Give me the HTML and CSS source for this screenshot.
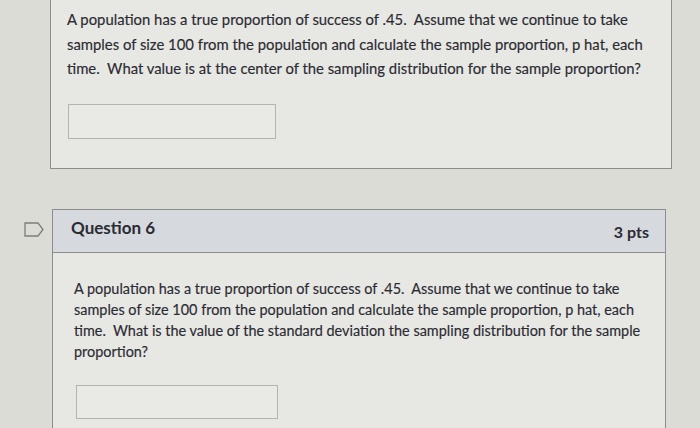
FILE: index.html
```html
<!DOCTYPE html>
<html>
<head>
<meta charset="utf-8">
<link rel="stylesheet" href="styles.css">
</head>
<body>
<div class="page">
  <div class="card card-prev">
    <p class="qtext">A population has a true proportion of success of .45.&nbsp; Assume that we continue to take<br>samples of size 100 from the population and calculate the sample proportion, p hat, each<br>time.&nbsp; What value is at the center of the sampling distribution for the sample proportion?</p>
    <div class="answer answer-prev"></div>
  </div>
  <div class="row">
    <div class="flag">
      <svg width="20" height="15" viewBox="0 0 20 15"><path d="M1 1 H14 L19 7.5 L14 14 H1 Z" fill="none" stroke="#7c7c7c" stroke-width="1.3"/></svg>
    </div>
    <div class="card card-q">
      <div class="qhead">
        <span class="qtitle">Question 6</span>
        <span class="pts">3 pts</span>
      </div>
      <div class="qbody">
        <p class="qtext qtext2">A population has a true proportion of success of .45.&nbsp; Assume that we continue to take<br>samples of size 100 from the population and calculate the sample proportion, p hat, each<br>time.&nbsp; What is the value of the standard deviation the sampling distribution for the sample<br>proportion?</p>
        <div class="answer answer-q"></div>
      </div>
    </div>
  </div>
</div>
</body>
</html>
```
FILE: styles.css
```css
html, body {
  margin: 0;
  padding: 0;
  background: #dcdcd6;
  overflow: hidden;
}
body {
  font-family: Lato, "Open Sans", sans-serif;
  color: #2b2b33;
  width: 700px;
  height: 428px;
}
.page {
  padding-left: 50px;
  display: flex;
  flex-direction: column;
  gap: 40px;
}
.card {
  background: #e7e7e3;
  border: 1px solid #8d8d90;
}
.card-prev {
  width: 622px;
  border-top: none;
  padding: 7px 0 0 16px;
  box-sizing: border-box;
  height: 169px;
}
.qtext {
  margin: 0;
  font-size: 14.85px;
  line-height: 24.5px;
  white-space: nowrap;
  -webkit-text-stroke: 0.15px #2b2b33;
}
.answer {
  border: 1px solid #b3b3b6;
  background: #e9e9e6;
  box-sizing: border-box;
}
.answer-prev {
  margin-top: 23px;
  margin-left: 1px;
  width: 208px;
  height: 35px;
}
.row {
  display: flex;
  margin-left: -26px;
}
.flag {
  width: 28px;
  padding-top: 12px;
}
.card-q {
  width: 612px;
  border-bottom: none;
}
.qhead {
  display: flex;
  justify-content: space-between;
  align-items: center;
  height: 43px;
  background: #d6d9de;
  border-bottom: 1px solid #8d8d90;
  padding: 0 16px 0 18px;
  box-sizing: border-box;
}
.qtitle {
  font-weight: 700;
  font-size: 17px;
  padding-bottom: 7px;
}
.pts {
  font-weight: 700;
  font-size: 16px;
}
.qbody {
  padding: 25px 20px 20px 21px;
}
.qtext2 {
  font-size: 14.45px;
  line-height: 21px;
}
.answer-q {
  margin-top: 23px;
  margin-left: 2px;
  width: 202px;
  height: 34px;
}
```
